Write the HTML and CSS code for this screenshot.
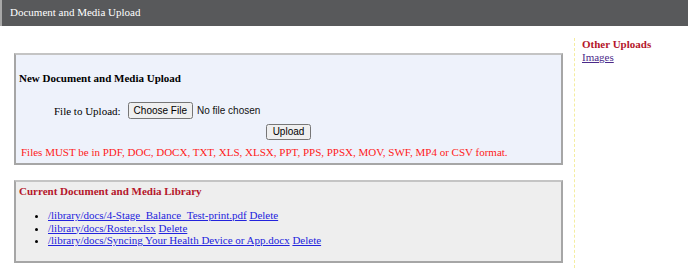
FILE: index.html
```html
<!DOCTYPE html>
<html lang="en">
<head>
    <meta charset="utf-8">
    <title>Document and Media Upload</title>
    <link rel="stylesheet" href="styles.css">
</head>
<body>
<div class="topbar">Document and Media Upload</div>

<div class="page">
    <div class="main">
        <form class="box upload-box" action="#" method="post" enctype="multipart/form-data">
            <div class="box-title">New Document and Media Upload</div>
            <div class="file-row">
                <label for="fileInput">File to Upload:</label>
                <input type="file" id="fileInput" name="file">
            </div>
            <div class="submit-row">
                <button type="submit" class="upload-btn">Upload</button>
            </div>
            <div class="formats">Files MUST be in PDF, DOC, DOCX, TXT, XLS, XLSX, PPT, PPS, PPSX, MOV, SWF, MP4 or CSV format.</div>
        </form>

        <div class="box library-box">
            <div class="box-title library-title">Current Document and Media Library</div>
            <ul class="file-list">
                <li><a href="#">/library/docs/4-Stage_Balance_Test-print.pdf</a> <a href="#">Delete</a></li>
                <li><a href="#">/library/docs/Roster.xlsx</a> <a href="#">Delete</a></li>
                <li><a href="#">/library/docs/Syncing Your Health Device or App.docx</a> <a href="#">Delete</a></li>
            </ul>
        </div>
    </div>

    <div class="sidebar">
        <div class="side-title">Other Uploads</div>
        <a href="#">Images</a>
    </div>
</div>
</body>
</html>
```

FILE: styles.css
```css
body {
    margin: 0;
    font-family: "Liberation Serif", "Times New Roman", serif;
    font-size: 11px;
    color: #000;
    background: white;
}

.topbar {
    background: #58595b;
    color: white;
    height: 26px;
    line-height: 25px;
    padding-left: 8px;
    border-left: 2px solid #a8a8a8;
    font-size: 11px;
}

.page {
    display: flex;
}

.main {
    width: 563px;
    padding: 27px 0 0 14px;
    box-sizing: border-box;
}

.box {
    border: 2px solid #a6a6a6;
    border-top-color: #c4c4c4;
    margin: 0;
}

.upload-box {
    background: #eef2fb;
    height: 112px;
    box-sizing: border-box;
    padding: 16px 0 0 3px;
}

.box-title {
    font-weight: bold;
    line-height: 14px;
}

.file-row {
    margin-top: 17px;
    padding-left: 35px;
    display: flex;
    align-items: center;
    height: 17px;
}

.file-row label {
    margin-right: 7px;
}

.file-row input {
    font-family: "Liberation Sans", Arial, sans-serif;
    font-size: 10px;
    color: #111;
}

.file-row input::file-selector-button {
    font-family: "Liberation Sans", Arial, sans-serif;
    font-size: 10px;
    height: 17px;
    padding: 0 4px;
    margin-right: 4px;
}

.submit-row {
    text-align: center;
    margin-top: 5px;
    padding-right: 3px;
    height: 16px;
}

.upload-btn {
    font-family: "Liberation Sans", Arial, sans-serif;
    font-size: 10px;
    height: 16px;
    padding: 0 5px;
    line-height: 12px;
    vertical-align: top;
}

.formats {
    color: #ff1a1a;
    margin-top: 5px;
    padding-left: 2px;
    line-height: 14px;
}

.library-box {
    margin-top: 15px;
    background: #eeeeee;
    height: 83px;
    box-sizing: border-box;
    padding: 2px 0 0 3px;
}

.library-title {
    color: #b5162b;
}

.file-list {
    margin: 11px 0 0;
    padding-left: 29px;
    line-height: 12.5px;
}

.file-list a {
    color: #2323dd;
}

.sidebar {
    margin-left: 11px;
    margin-top: 12px;
    border-left: 1px dashed #f4eda0;
    padding: 0 0 0 7px;
    min-height: 230px;
}

.side-title {
    color: #b5162b;
    font-weight: bold;
    line-height: 13px;
}

.sidebar a {
    color: #4b2a8a;
    line-height: 13px;
}
```
